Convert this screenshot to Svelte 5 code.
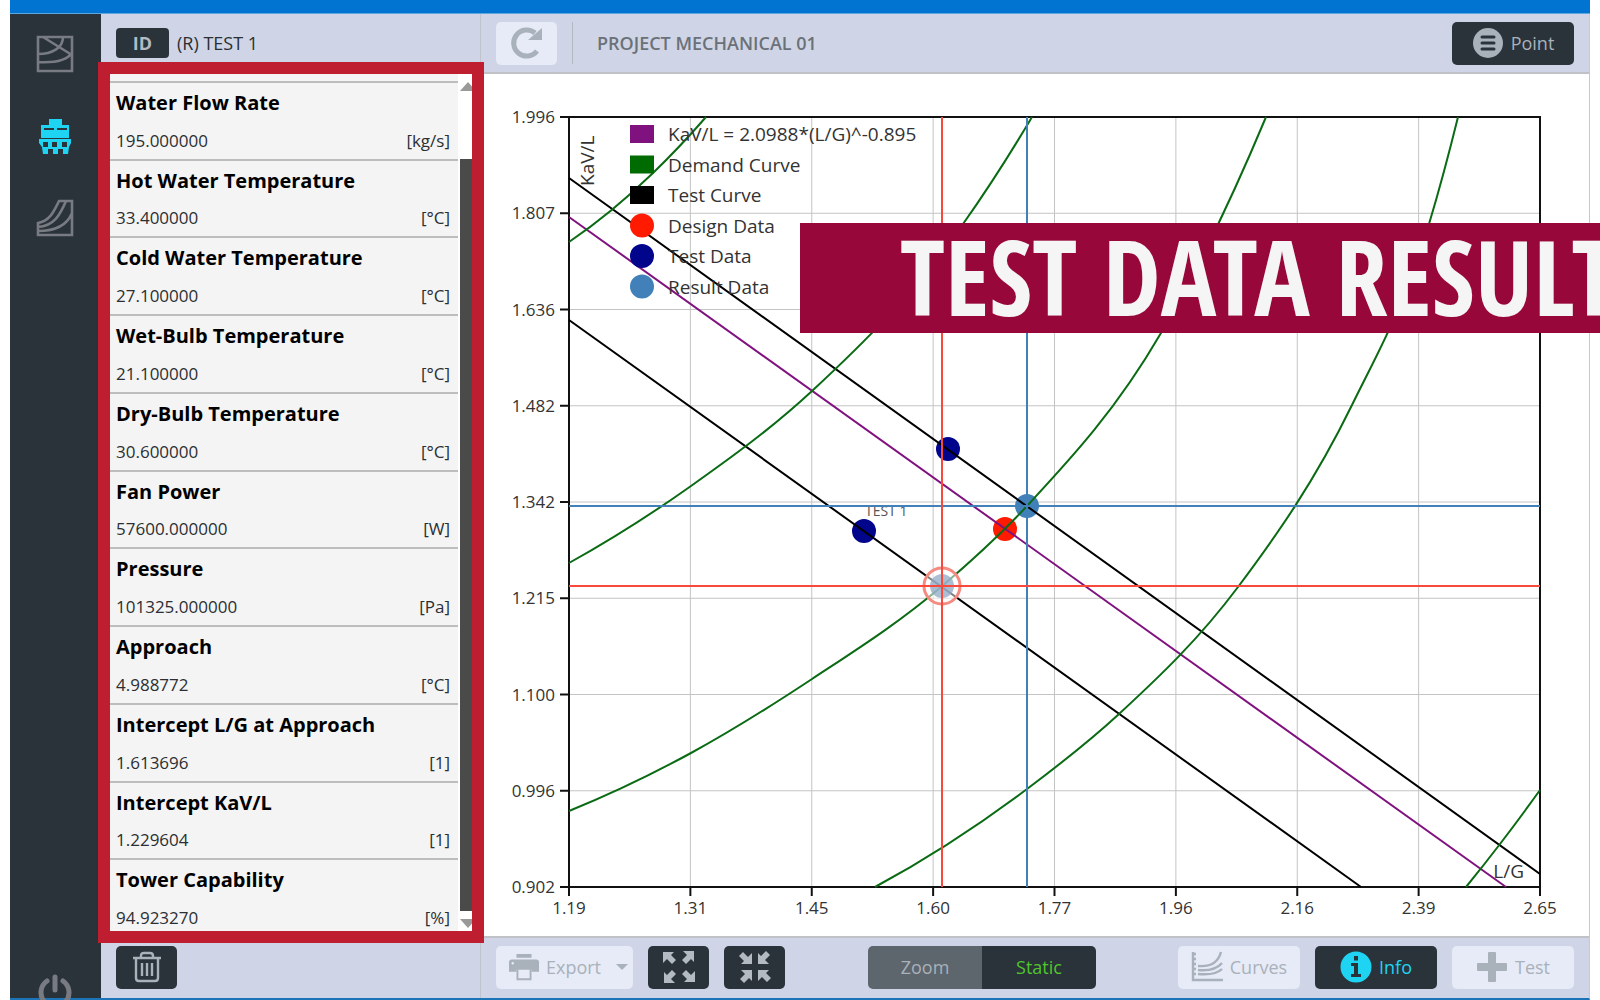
<script lang="ts">
	type Reading = { name: string; value: string; unit: string };
	type Point = [number, number];

	const readings: Reading[] = [
		{ name: 'Water Flow Rate', value: '195.000000', unit: '[kg/s]' },
		{ name: 'Hot Water Temperature', value: '33.400000', unit: '[°C]' },
		{ name: 'Cold Water Temperature', value: '27.100000', unit: '[°C]' },
		{ name: 'Wet-Bulb Temperature', value: '21.100000', unit: '[°C]' },
		{ name: 'Dry-Bulb Temperature', value: '30.600000', unit: '[°C]' },
		{ name: 'Fan Power', value: '57600.000000', unit: '[W]' },
		{ name: 'Pressure', value: '101325.000000', unit: '[Pa]' },
		{ name: 'Approach', value: '4.988772', unit: '[°C]' },
		{ name: 'Intercept L/G at Approach', value: '1.613696', unit: '[1]' },
		{ name: 'Intercept KaV/L', value: '1.229604', unit: '[1]' },
		{ name: 'Tower Capability', value: '94.923270', unit: '[%]' }
	];

	// plot area, in chart units
	const W = 971;
	const H = 770;

	const xTicks = ['1.19', '1.31', '1.45', '1.60', '1.77', '1.96', '2.16', '2.39', '2.65'];
	const yTicks = ['1.996', '1.807', '1.636', '1.482', '1.342', '1.215', '1.100', '0.996', '0.902'];
	const xAt = (i: number) => (W * i) / (xTicks.length - 1);
	const yAt = (i: number) => (H * i) / (yTicks.length - 1);

	const demand: Point[][] = [
		[[0, 125], [84, 56], [137, 0]],
		[[0, 446], [122, 369], [243, 274], [394, 107], [463, 0]],
		[[0, 694], [122, 636], [243, 562], [372, 470], [458, 389], [592, 216], [697, 0]],
		[[306, 770], [458, 672], [550, 597], [669, 470], [783, 288], [860, 107], [889, 0]],
		[[897, 770], [931, 727], [971, 673]]
	];

	const legend = [
		{ label: 'KaV/L = 2.0988*(L/G)^-0.895', color: '#80127f', dot: false },
		{ label: 'Demand Curve', color: '#006b00', dot: false },
		{ label: 'Test Curve', color: '#000', dot: false },
		{ label: 'Design Data', color: '#ff1a00', dot: true },
		{ label: 'Test Data', color: '#00058c', dot: true },
		{ label: 'Result Data', color: '#4180b8', dot: true }
	];

	// cubic Hermite through the points, slopes from the parabola over each three
	function smooth(p: Point[]) {
		const n = p.length - 1;
		const h = p.slice(1).map((q, i) => q[0] - p[i][0]);
		const s = p.slice(1).map((q, i) => (q[1] - p[i][1]) / h[i]);
		const m = p.map((_, i) => {
			if (i === 0 || i === n) return 0;
			return (s[i - 1] * h[i] + s[i] * h[i - 1]) / (h[i - 1] + h[i]);
		});
		m[0] = 2 * s[0] - m[1];
		m[n] = 2 * s[n - 1] - m[n - 1];

		let d = `M${p[0]}`;
		for (let i = 0; i < n; i++) {
			const [x0, y0] = p[i];
			const [x1, y1] = p[i + 1];
			const t = h[i] / 3;
			d += `C${x0 + t},${y0 + m[i] * t} ${x1 - t},${y1 - m[i + 1] * t} ${x1},${y1}`;
		}
		return d;
	}

	let mode = $state('Static');
</script>

<div class="window">
	<header class="titlebar"></header>

	<div class="body">
		<nav class="sidebar">
			<button class="nav" aria-label="Design">
				<svg width="38" height="38" viewBox="0 0 38 38" fill="none" stroke="#787c82" stroke-width="2.6">
					<path d="M2 2H36V36H2Z M2 19C16 19 27 13 27 2 M2 27C18 28 31 25 36 18 M7 2L36 20" />
				</svg>
			</button>
			<button class="nav active" aria-label="Tower test">
				<svg width="38" height="38" viewBox="0 0 38 38" fill="#1fd3f2">
					<path
						fill-rule="evenodd"
						d="M13 2h13v6h7v13H5V8h8z M8 11v2h10v-2z M21 11v2h10v-2z"
					/>
					<path
						fill-rule="evenodd"
						d="M3 22h32v4l-2 4-1 7h-5v-5h-5v5h-5v-5h-5v5H7l-1-7-3-4z M7 25v5h5v-5z M16 25v5h5v-5z M26 25v5h5v-5z"
					/>
				</svg>
			</button>
			<button class="nav" aria-label="Performance">
				<svg width="38" height="38" viewBox="0 0 38 38" fill="none" stroke="#787c82" stroke-width="2.6">
					<path d="M2 36V24C14 22 18 12 23 2H36V36Z M2 28C18 27 24 16 30 2 M2 32C22 32 32 24 36 14" />
				</svg>
			</button>
			<button class="nav power" aria-label="Power">
				<svg width="34" height="34" viewBox="0 0 34 34" fill="none" stroke="#787c82" stroke-width="5" stroke-linecap="round">
					<path d="M17 3V16 M9 7a14 14 0 1 0 16 0" />
				</svg>
			</button>
		</nav>

		<section class="panel">
			<div class="bar">
				<span class="id">ID</span>
				<span class="record">(R) TEST 1</span>
			</div>
			<div class="list">
				<ul>
					{#each readings as r}
						<li>
							<strong>{r.name}</strong>
							<div class="reading"><span>{r.value}</span><span>{r.unit}</span></div>
						</li>
					{/each}
				</ul>
				<div class="scroll">
					<i class="up"></i>
					<i class="thumb"></i>
					<i class="down"></i>
				</div>
			</div>
			<div class="bar foot">
				<button class="btn dark icon" aria-label="Delete">
					<svg width="30" height="32" viewBox="0 0 30 32" fill="none" stroke="#a9b1ba" stroke-width="2.4">
						<path d="M1 7H29 M4 7V27q0 3 3 3H23q3 0 3-3V7 M9 7V5q0-3 3-3H18q3 0 3 3V7 M10 12V25 M15 12V25 M20 12V25" />
					</svg>
				</button>
			</div>
			<div class="highlight"></div>
		</section>

		<main>
			<div class="bar">
				<button class="btn light icon" aria-label="Refresh">
					<svg width="34" height="34" viewBox="0 0 34 34">
						<path d="M27 25A13 13 0 1 1 25 7" fill="none" stroke="#a9b1ba" stroke-width="5" />
						<path d="M32 2V14H18Z" fill="#a9b1ba" />
					</svg>
				</button>
				<span class="divider"></span>
				<h1>PROJECT MECHANICAL 01</h1>
				<button class="btn dark wide end">
					<svg width="32" height="32" viewBox="0 0 32 32">
						<circle cx="16" cy="16" r="15" fill="#a9b1ba" />
						<path d="M10 10H22 M10 16H22 M10 22H22" stroke="#2a323a" stroke-width="3" stroke-linecap="round" />
					</svg>
					Point
				</button>
			</div>

			<div class="chart">
				<svg viewBox="0 0 1108 862" role="img" aria-label="Demand and test curves">
					<defs>
						<clipPath id="tag"><rect x="290" y="390" width="60" height="20" /></clipPath>
					</defs>
					<g transform="translate(88 43)">
						{#each xTicks as t, i}
							<line class="grid" x1={xAt(i)} x2={xAt(i)} y1="0" y2={H} />
							<line class="tick" x1={xAt(i)} x2={xAt(i)} y1={H} y2={H + 9} />
							<text class="num" x={xAt(i)} y={H + 27} text-anchor="middle">{t}</text>
						{/each}
						{#each yTicks as t, i}
							<line class="grid" y1={yAt(i)} y2={yAt(i)} x1="0" x2={W} />
							<line class="tick" y1={yAt(i)} y2={yAt(i)} x1="-9" x2="0" />
							<text class="num" x="-14" y={yAt(i) + 6} text-anchor="end">{t}</text>
						{/each}
						<rect class="frame" width={W} height={H} />

						<text class="label" transform="translate(25 69) rotate(-90)">KaV/L</text>
						<text class="label" x="955" y="761" text-anchor="end">L/G</text>
						<text class="tag" x="296" y="399" clip-path="url(#tag)">TEST 1</text>

						<circle cx="436" cy="412" r="12" fill="#ff1a00" />
						<circle cx="379" cy="332" r="12" fill="#00058c" />
						<circle cx="295" cy="414" r="12" fill="#00058c" />
						<circle cx="458" cy="389" r="12" fill="#4180b8" />

						<path class="curve" stroke="#000" d="M0 61L971 757M0 203L792 770" />
						<path class="curve" stroke="#80127f" d="M0 100L937 770" />
						{#each demand as points}
							<path class="curve" stroke="#0b6b14" d={smooth(points)} />
						{/each}

						<path class="cross" stroke="#4180b8" d="M458 0V770M0 389H971" />
						<circle cx="373" cy="469" r="18" fill="#fff" fill-opacity="0.5" />
						<circle cx="373" cy="469" r="12" fill="#8fa8c4" fill-opacity="0.75" />
						<circle cx="373" cy="469" r="18" fill="none" stroke="#f58a80" stroke-width="3" />
						<path class="cross" stroke="#f9493c" d="M373 0V770M0 469H971" />

						{#each legend as item, i}
							{#if item.dot}
								<circle cx="73" cy={17 + i * 30.5} r="12" fill={item.color} />
							{:else}
								<rect x="61" y={8 + i * 30.5} width="24" height="18" fill={item.color} />
							{/if}
							<text class="label" x="99" y={24 + i * 30.5}>{item.label}</text>
						{/each}
					</g>
				</svg>
			</div>

			<div class="bar foot">
				<button class="btn light export">
					<svg width="30" height="30" viewBox="0 0 32 30" fill="#a9b1ba">
						<path d="M8 1H24V5H8Z M3 7H29Q32 7 32 10V20H24V17H8V20H0V10Q0 7 3 7Z" />
						<path d="M9 17H23V28H9Z" fill="#e6ebf7" stroke="#a9b1ba" stroke-width="2" />
						<circle cx="4" cy="11" r="1.3" fill="#e6ebf7" />
					</svg>
					Export
					<i class="caret"></i>
				</button>
				<button class="btn dark icon" aria-label="Expand">
					<svg width="34" height="34" viewBox="0 0 34 34" fill="#b3bac2">
						{#each [0, 90, 180, 270] as a}
							<path transform="rotate({a} 17 17)" d="M1 2H12L9 5L14 10L10 14L5 9L1 13Z" />
						{/each}
					</svg>
				</button>
				<button class="btn dark icon" aria-label="Collapse">
					<svg width="34" height="34" viewBox="0 0 34 34" fill="#b3bac2">
						{#each [0, 90, 180, 270] as a}
							<path transform="rotate({a} 17 17)" d="M14 14H3L6 11L1 6L5 2L10 7L14 3Z" />
						{/each}
					</svg>
				</button>
				<div class="toggle">
					{#each ['Zoom', 'Static'] as m}
						<button class:on={mode === m} onclick={() => (mode = m)}>{m}</button>
					{/each}
				</div>
				<button class="btn light wide">
					<svg width="32" height="32" viewBox="0 0 32 32" fill="none" stroke="#a9b1ba" stroke-width="2.4">
						<path d="M2 1V29H32 M2 3H5 M2 8H5 M2 13H5 M2 18H5 M2 23H5" />
						<path d="M7 15C18 16 27 12 30 1 M7 19C18 20 26 18 31 12 M7 23C18 24 26 23 31 18" />
					</svg>
					Curves
				</button>
				<button class="btn dark wide info">
					<svg width="32" height="32" viewBox="0 0 32 32">
						<circle cx="16" cy="16" r="15.5" fill="#1fd3f2" />
						<path d="M14 5H18V9.500H14Z M11 12H18V23H21V26H11V23H14V15H11Z" fill="#2a323a" />
					</svg>
					Info
				</button>
				<button class="btn light wide">
					<svg width="32" height="32" viewBox="0 0 32 32" fill="#a9b1ba">
						<path d="M12 2q0-1 1-1h6q1 0 1 1V12H30q1 0 1 1v6q0 1-1 1H20V30q0 1-1 1H13q-1 0-1-1V20H2q-1 0-1-1V13q0-1 1-1H12Z" />
					</svg>
					Test
				</button>
			</div>
		</main>
	</div>
	<div class="banner">TEST DATA RESULT</div>
</div>

<style>
	:global(body) {
		background: #fff;
	}

	.window {
		position: relative;
		display: flex;
		flex-direction: column;
		height: 100vh;
		padding: 0 10px;
		box-sizing: border-box;
		overflow: hidden;
		font-family: 'Open Sans', 'Noto Sans', sans-serif;
		font-size: 18px;
		color: #2b2f33;
	}

	.titlebar {
		height: 13px;
		flex: none;
		background: #0173d1;
		border-bottom: 1px solid #5fa5de;
	}

	.body {
		flex: 1;
		display: flex;
		min-height: 0;
		border-bottom: 2px solid #1b73b8;
		border-right: 1px solid #c6c8cc;
	}

	button {
		font: inherit;
		border: 0;
		padding: 0;
		cursor: pointer;
	}

	.sidebar {
		flex: 0 0 91px;
		display: flex;
		flex-direction: column;
		align-items: center;
		gap: 44px;
		padding: 21px 2px 0 0;
		box-sizing: border-box;
		background: #2a323a;
	}

	.nav {
		display: flex;
		background: none;
	}

	.power {
		margin-top: auto;
		margin-bottom: -10px;
	}

	.panel {
		position: relative;
		flex: 0 0 380px;
		display: flex;
		flex-direction: column;
		box-sizing: border-box;
		border-right: 1px solid #bfc3cc;
	}

	.bar {
		flex: none;
		display: flex;
		align-items: center;
		height: 60px;
		padding: 0 15px;
		box-sizing: border-box;
		background: #cfd5e6;
		border-bottom: 2px solid #c0c2c8;
	}

	.foot {
		height: 62px;
		padding-bottom: 2px;
		border-bottom: 0;
		border-top: 2px solid #c0c2c8;
	}

	.id {
		width: 53px;
		line-height: 30px;
		border-radius: 4px;
		background: #2a323a;
		color: #b4bac1;
		font-weight: 700;
		text-align: center;
	}

	.record {
		margin-left: 8px;
	}

	.list {
		flex: 1;
		display: flex;
		min-height: 0;
		background: #fff;
	}

	ul {
		flex: 1;
		display: flex;
		flex-direction: column;
		margin: 0;
		padding: 7px 0 0 9px;
		list-style: none;
		background: #f4f4f4;
	}

	li {
		flex: 1;
		display: flex;
		flex-direction: column;
		justify-content: space-between;
		padding: 7px 8px 6px 6px;
		border-top: 2px solid #bdbdbd;
	}

	strong {
		font-size: 20px;
		line-height: 26px;
		color: #000;
	}

	.reading {
		display: flex;
		justify-content: space-between;
		font-size: 17px;
		line-height: 24px;
	}

	.scroll {
		flex: 0 0 22px;
		display: flex;
		flex-direction: column;
		padding: 8px 0 8px 2px;
		box-sizing: border-box;
	}

	.up,
	.down {
		width: 0;
		border: 8px solid transparent;
		border-top-width: 0;
		border-bottom: 9px solid #999;
	}

	.down {
		border-bottom: 0;
		border-top: 9px solid #999;
	}

	.thumb {
		flex: 1;
		width: 17px;
		margin: 68px 0 8px;
		background: #4a4a4a;
	}

	.highlight {
		position: absolute;
		top: 48px;
		bottom: 55px;
		left: -3px;
		right: -4px;
		border: 12px solid #be1e30;
		pointer-events: none;
	}

	main {
		flex: 1;
		display: flex;
		flex-direction: column;
		min-width: 0;
	}

	.divider {
		width: 1px;
		height: 42px;
		margin-right: 24px;
		background: #b4b8c0;
	}

	h1 {
		margin: 0;
		font-size: 18px;
		font-weight: 600;
		color: #6b7178;
	}

	.btn {
		display: flex;
		align-items: center;
		justify-content: center;
		gap: 7px;
		height: 43px;
		border-radius: 5px;
		margin-right: 15px;
	}

	.icon {
		width: 61px;
	}

	.wide {
		width: 122px;
	}

	.end {
		margin-left: auto;
		margin-right: 0;
	}

	.dark {
		background: #2a323a;
		color: #a9b1ba;
	}

	.light {
		background: #e6ebf7;
		color: #a9b1ba;
	}

	.info {
		color: #1fd3f2;
	}

	.wide:last-child {
		margin-right: 0;
	}

	.export {
		width: 137px;
		justify-content: flex-end;
		padding-right: 5px;
	}

	.caret {
		border: 6px solid transparent;
		border-top-color: #a9b1ba;
		border-bottom: 0;
		margin-left: 8px;
	}

	.toggle {
		display: flex;
		width: 228px;
		height: 43px;
		margin: 0 auto 0 68px;
		border-radius: 5px;
		overflow: hidden;
	}

	.toggle button {
		flex: 1;
		background: #5d656d;
		color: #a9b1ba;
	}

	.toggle .on {
		background: #2a323a;
		color: #4fc62a;
	}

	.chart {
		flex: 1;
		min-height: 0;
		background: #fff;
	}

	.chart svg {
		display: block;
		width: 100%;
		height: 100%;
	}

	.grid {
		stroke: #c4c4c4;
		stroke-width: 1;
	}

	.tick,
	.frame {
		fill: none;
		stroke: #111;
		stroke-width: 2;
	}

	.curve,
	.cross {
		fill: none;
		stroke-width: 2;
	}

	.num {
		font-size: 17px;
		fill: #333;
	}

	.label {
		font-size: 19px;
		fill: #333;
	}

	.tag {
		font-size: 14px;
		fill: #555;
	}

	.banner {
		position: absolute;
		top: 223px;
		left: 50%;
		right: 0;
		height: 110px;
		padding-left: 100px;
		overflow: hidden;
		background: #98073a;
		color: #f5f5f5;
		font-family: 'Open Sans Condensed', 'Liberation Sans Narrow', sans-serif;
		font-size: 104px;
		font-weight: 700;
		line-height: 106px;
		white-space: nowrap;
	}
</style>
